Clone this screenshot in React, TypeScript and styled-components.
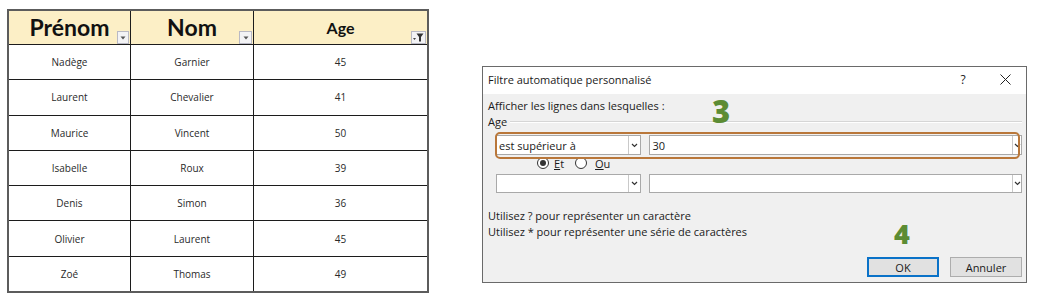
import React from "react";
import styled, { createGlobalStyle } from "styled-components";

const Global = createGlobalStyle`
  html, body { margin: 0; padding: 0; background: #ffffff; }
  body { width: 1044px; height: 302px; overflow: hidden; }
  * { box-sizing: border-box; }
`;

const Page = styled.div`
  display: flex;
  align-items: flex-start;
  width: 1044px;
  height: 302px;
`;

/* ---------- Spreadsheet table ---------- */
const Sheet = styled.div`
  margin: 9px 0 0 7px;
  width: 422px;
  height: 284px;
  display: grid;
  grid-template-columns: 121px 122px 1fr;
  grid-template-rows: 33px repeat(7, 1fr);
  gap: 1px;
  background: #1c1c1c;
  border: 2px solid #5c5c5c;
`;

const HeadCell = styled.div<{ $size: number }>`
  position: relative;
  background: #fcefc6;
  display: flex;
  align-items: center;
  justify-content: center;
  font-family: Lato, "Open Sans", sans-serif;
  font-weight: 700;
  font-size: ${(p) => p.$size}px;
  color: #111;
  padding-bottom: 1px;
`;

const FilterButton = styled.div<{ $w: number }>`
  position: absolute;
  right: 1px;
  bottom: 0px;
  width: ${(p) => p.$w}px;
  height: 13px;
  background: #f3f3f5;
  border: 1px solid #b9b9c4;
  display: flex;
  align-items: center;
  justify-content: center;
`;

const Cell = styled.div`
  background: #ffffff;
  display: flex;
  align-items: center;
  justify-content: center;
  font-family: "Open Sans", sans-serif;
  font-size: 10px;
  color: #2a2a2a;
`;

/* ---------- Dialog ---------- */
const Dialog = styled.div`
  position: relative;
  margin: 66px 0 0 53px;
  width: 545px;
  height: 217px;
  border: 1px solid #6a6a6a;
  background: #f0f0f0;
  display: flex;
  flex-direction: column;
  font-family: "Open Sans", sans-serif;
  font-size: 11px;
  color: #1a1a1a;
`;

const TitleBar = styled.div`
  height: 27px;
  background: #ffffff;
  display: flex;
  align-items: center;
  padding: 0 0 3px 5px;
`;

const Title = styled.div`
  flex: 1;
  font-size: 11px;
`;

const TitleButton = styled.div`
  width: 42px;
  height: 24px;
  display: flex;
  align-items: center;
  justify-content: center;
  font-size: 12px;
  color: #222;
`;

const Body = styled.div`
  flex: 1;
  display: flex;
  flex-direction: column;
  padding: 4px 4px 5px 5px;
`;

const Line = styled.div`
  height: 16px;
  line-height: 16px;
  white-space: nowrap;
`;

const GroupRow = styled.div`
  height: 14px;
  display: flex;
  align-items: center;
  gap: 3px;
`;

const GroupRule = styled.div`
  flex: 1;
  height: 2px;
  border-top: 1px solid #d6d6d6;
  border-bottom: 1px solid #ffffff;
  margin-top: 2px;
`;

const CriteriaRow = styled.div<{ $top: number; $h: number }>`
  display: flex;
  gap: 8px;
  margin-top: ${(p) => p.$top}px;
  padding-left: 8px;
  height: ${(p) => p.$h}px;
`;

const Combo = styled.div<{ $w: number }>`
  width: ${(p) => p.$w}px;
  height: 100%;
  background: #ffffff;
  border: 1px solid #a9a9a9;
  display: flex;
  align-items: stretch;
`;

const ComboText = styled.div`
  flex: 1;
  padding-left: 2px;
  display: flex;
  align-items: center;
  font-size: 11px;
`;

const ComboArrow = styled.div<{ $w: number }>`
  width: ${(p) => p.$w}px;
  border-left: 1px solid #c9c9c9;
  background: #ffffff;
  display: flex;
  align-items: center;
  justify-content: center;
`;

const RadioRow = styled.div`
  height: 16px;
  display: flex;
  align-items: center;
  padding-left: 49px;
  gap: 5px;
`;

const RadioCircle = styled.div<{ $on?: boolean }>`
  width: 12px;
  height: 12px;
  border-radius: 50%;
  border: 1px solid #333;
  background: #fff;
  display: flex;
  align-items: center;
  justify-content: center;
  &::after {
    content: "";
    display: ${(p) => (p.$on ? "block" : "none")};
    width: 6px;
    height: 6px;
    border-radius: 50%;
    background: #333;
  }
`;

const RadioLabel = styled.span<{ $gap: number }>`
  margin-left: ${(p) => p.$gap}px;
  margin-right: 6px;
  u { text-decoration: underline; }
`;

const Notes = styled.div`
  margin-top: 15px;
  display: flex;
  flex-direction: column;
`;

const ButtonRow = styled.div`
  margin-top: auto;
  display: flex;
  justify-content: flex-end;
  gap: 11px;
`;

const Button = styled.div<{ $default?: boolean }>`
  width: 72px;
  height: 20px;
  background: #e1e1e1;
  border: ${(p) => (p.$default ? "2px solid #0a72c8" : "1px solid #adadad")};
  display: flex;
  align-items: center;
  justify-content: center;
  font-size: 11px;
`;

const Highlight = styled.div`
  position: absolute;
  left: 12px;
  top: 65px;
  width: 525px;
  height: 27px;
  border: 2px solid #b9773a;
  border-radius: 5px;
  pointer-events: none;
`;

const Marker = styled.div<{ $x: number; $y: number; $size: number }>`
  position: absolute;
  left: ${(p) => p.$x}px;
  top: ${(p) => p.$y}px;
  font-family: "Open Sans", sans-serif;
  font-weight: 800;
  font-size: ${(p) => p.$size}px;
  line-height: 1;
  color: #5c8c34;
`;

const Chevron = () => (
  <svg width="7" height="5" viewBox="0 0 7 5">
    <polyline points="1,1 3.5,3.5 6,1" fill="none" stroke="#333" strokeWidth="1.2" />
  </svg>
);

const Tri = () => (
  <svg width="6" height="4" viewBox="0 0 6 4">
    <polygon points="0.5,0.5 5.5,0.5 3,3.5" fill="#555" />
  </svg>
);

const Funnel = () => (
  <svg width="11" height="9" viewBox="0 0 11 9">
    <polygon points="0,5 3,5 1.5,7" fill="#444" />
    <polygon points="3.5,0.5 10.5,0.5 8,4 8,8.5 6,8.5 6,4" fill="#333" />
  </svg>
);

const rows: [string, string, number][] = [
  ["Nadège", "Garnier", 45],
  ["Laurent", "Chevalier", 41],
  ["Maurice", "Vincent", 50],
  ["Isabelle", "Roux", 39],
  ["Denis", "Simon", 36],
  ["Olivier", "Laurent", 45],
  ["Zoé", "Thomas", 49],
];

export default function App() {
  return (
    <>
      <Global />
      <Page>
        <Sheet>
          <HeadCell $size={23}>
            Prénom
            <FilterButton $w={12}>
              <Tri />
            </FilterButton>
          </HeadCell>
          <HeadCell $size={23}>
            Nom
            <FilterButton $w={13}>
              <Tri />
            </FilterButton>
          </HeadCell>
          <HeadCell $size={16}>
            Age
            <FilterButton $w={15}>
              <Funnel />
            </FilterButton>
          </HeadCell>
          {rows.map(([p, n, a]) => (
            <React.Fragment key={p + n}>
              <Cell>{p}</Cell>
              <Cell>{n}</Cell>
              <Cell>{a}</Cell>
            </React.Fragment>
          ))}
        </Sheet>

        <Dialog>
          <TitleBar>
            <Title>Filtre automatique personnalisé</Title>
            <TitleButton>?</TitleButton>
            <TitleButton>
              <svg width="11" height="11" viewBox="0 0 11 11">
                <path d="M0.5 0.5 L10.5 10.5 M10.5 0.5 L0.5 10.5" stroke="#222" strokeWidth="1" />
              </svg>
            </TitleButton>
          </TitleBar>
          <Body>
            <Line>Afficher les lignes dans lesquelles :</Line>
            <GroupRow>
              <span>Age</span>
              <GroupRule />
            </GroupRow>
            <CriteriaRow $top={7} $h={20}>
              <Combo $w={146}>
                <ComboText>est supérieur à</ComboText>
                <ComboArrow $w={12}>
                  <Chevron />
                </ComboArrow>
              </Combo>
              <Combo $w={374}>
                <ComboText>30</ComboText>
                <ComboArrow $w={9}>
                  <Chevron />
                </ComboArrow>
              </Combo>
            </CriteriaRow>
            <RadioRow>
              <RadioCircle $on />
              <RadioLabel $gap={0}>
                <u>E</u>t
              </RadioLabel>
              <RadioCircle />
              <RadioLabel $gap={3}>
                <u>O</u>u
              </RadioLabel>
            </RadioRow>
            <CriteriaRow $top={3} $h={19}>
              <Combo $w={146}>
                <ComboText />
                <ComboArrow $w={12}>
                  <Chevron />
                </ComboArrow>
              </Combo>
              <Combo $w={374}>
                <ComboText />
                <ComboArrow $w={9}>
                  <Chevron />
                </ComboArrow>
              </Combo>
            </CriteriaRow>
            <Notes>
              <Line>Utilisez ? pour représenter un caractère</Line>
              <Line>Utilisez * pour représenter une série de caractères</Line>
            </Notes>
            <ButtonRow>
              <Button $default>OK</Button>
              <Button>Annuler</Button>
            </ButtonRow>
          </Body>
          <Highlight />
          <Marker $x={229} $y={29} $size={31}>3</Marker>
          <Marker $x={411} $y={153} $size={27}>4</Marker>
        </Dialog>
      </Page>
    </>
  );
}
